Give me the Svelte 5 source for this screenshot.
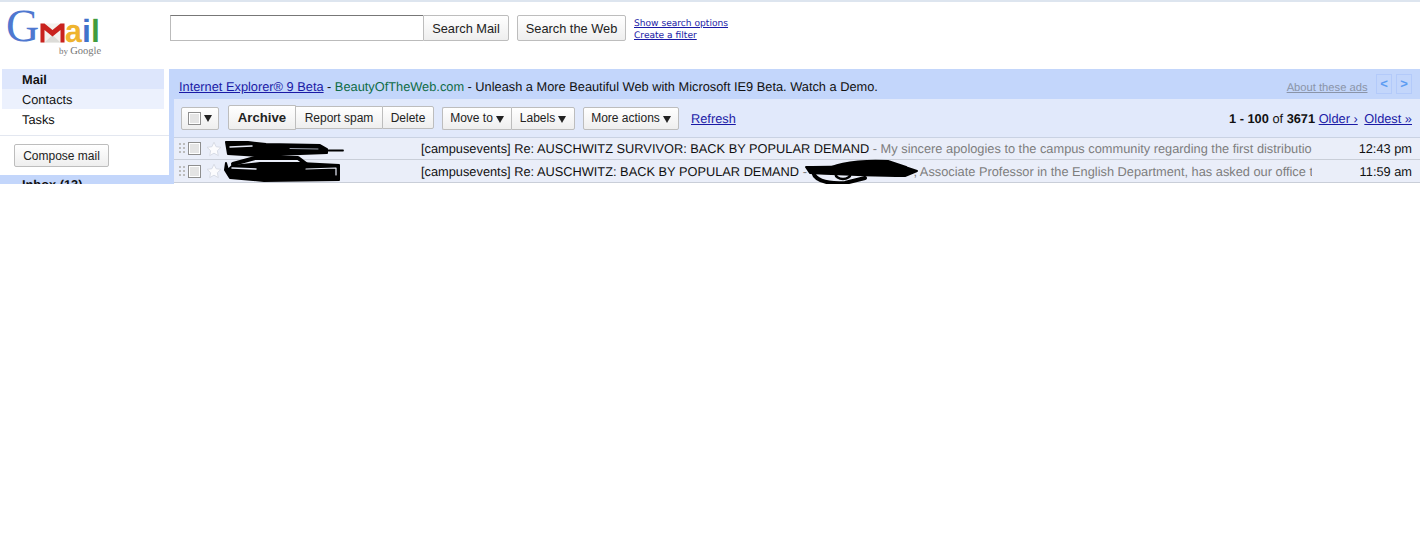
<script>
  const rows = [
    { subj: '[campusevents] Re: AUSCHWITZ SURVIVOR: BACK BY POPULAR DEMAND', before: ' - My sincere apologies to the campus community regarding the first distributio', after: '', time: '12:43 pm' },
    { subj: '[campusevents] Re: AUSCHWITZ: BACK BY POPULAR DEMAND', before: ' - ', after: ', Associate Professor in the English Department, has asked our office t', time: '11:59 am' }
  ];
</script>

<div class="page">
  <header class="top">
    <div class="logo">
      <span class="g">G</span>
      <svg class="m" width="25" height="20" viewBox="0 0 25 20">
        <rect x="0.500" y="0.500" width="24" height="19" fill="#f4f2ee"/>
        <path d="M4.500 19.500L12.500 12l8 7.500z" fill="#dcdcd8"/>
        <path d="M.5.500h4l8 6.500 8-6.500h4v19h-4V7l-8 6.500L4.500 7v12.500h-4z" fill="#c9231e"/>
      </svg>
      <span class="a">a</span><span class="i">i</span><span class="l">l</span>
      <span class="by">by <span class="goog">Google</span></span>
    </div>
    <div class="search">
      <input class="q" type="text" aria-label="Search" />
      <button class="btn attached">Search Mail</button>
      <button class="btn web">Search the Web</button>
      <div class="searchlinks">
        <a href="#o">Show search options</a>
        <a href="#f">Create a filter</a>
      </div>
    </div>
  </header>

  <div class="body">
    <nav class="side">
      <ul class="nav">
        <li class="cur">Mail</li>
        <li class="alt">Contacts</li>
        <li>Tasks</li>
      </ul>
      <div class="composewrap"><button class="btn compose">Compose mail</button></div>
      <div class="inbox">Inbox (13)</div>
    </nav>

    <main class="main">
      <div class="ad">
        <a href="#ie">Internet Explorer® 9 Beta</a>
        <span class="sep">-</span>
        <span class="dom">BeautyOfTheWeb.com</span>
        <span class="sep">-</span>
        <span>Unleash a More Beautiful Web with Microsoft IE9 Beta. Watch a Demo.</span>
        <span class="grow"></span>
        <a class="about" href="#a">About these ads</a>
        <span class="pager"><i>&lt;</i><i>&gt;</i></span>
      </div>

      <div class="toolbar">
        <button class="btn sel"><span class="cb"></span><span class="caret"></span></button>
        <div class="group">
          <button class="btn archive">Archive</button>
          <button class="btn mid">Report spam</button>
          <button class="btn end del">Delete</button>
        </div>
        <div class="group g2">
          <button class="btn first">Move to<span class="caret"></span></button>
          <button class="btn end lab">Labels<span class="caret"></span></button>
        </div>
        <button class="btn more">More actions<span class="caret"></span></button>
        <a class="refresh" href="#r">Refresh</a>
        <span class="grow"></span>
        <div class="count"><b>1</b> <b>-</b> <b>100</b> of <b>3671</b> <a href="#older">Older ›</a> <a class="oldest" href="#oldest">Oldest »</a></div>
      </div>

      <div class="list">
        {#each rows as r, i}
          <div class="row" class:tall={i === 1}>
            <span class="grip"></span>
            <span class="cb"></span>
            <svg class="star" width="16" height="16" viewBox="0 0 16 16"><path d="M8 1.200l2.100 4.500 4.900.6-3.600 3.400.9 4.900L8 12.200l-4.300 2.400.9-4.900L1 6.300l4.900-.6z" fill="#fbfbfd" stroke="#d8dce6"/></svg>
            <span class="who"></span>
            <span class="msg">{r.subj}<span class="snip">{r.before}{#if r.after}<span class="hidden-name"></span>{r.after}{/if}</span></span>
            <span class="time">{r.time}</span>
          </div>
        {/each}

        <svg class="scribble" width="760" height="50" viewBox="174 138 760 50" aria-hidden="true">
          <g fill="none" stroke="#000" stroke-linecap="round" stroke-linejoin="round">
            <path d="M226 142L248 142 266 144 320 145 327 149 327 153 300 154 262 156 228 154z" fill="#000" stroke-width="2"/>
            <path d="M326 150.500H343" stroke-width="1.800"/>
            <path d="M230 147L252 146" stroke="#e8ecf8" stroke-width="1.500"/>
            <path d="M290 148.500L318 149" stroke="#9aa0ad" stroke-width="1"/>
            <path d="M233 164L255 158 298 158 306 164" stroke-width="4"/>
            <path d="M226 163L228 170 232 166 260 163 300 163 339 165 339 180 264 181 230 178 225 170z" fill="#000" stroke-width="2"/>
            <path d="M232 168L256 169" stroke="#e8ecf8" stroke-width="1.500"/>
            <path d="M306 169L336 168 336 175" stroke="#e8ecf8" stroke-width="1.200"/>
            <path d="M806 167C840 167 880 165 905 167L917 171 905 176C880 176 850 175 810 173z" fill="#000" stroke-width="2"/>
            <path d="M832 167C845 161 870 160 888 161L906 167" fill="#000" stroke-width="2"/>
            <path d="M813 172C815 180 825 184 845 183L865 178" stroke-width="4"/>
            <ellipse cx="843" cy="174" rx="7.500" ry="5" stroke-width="2.500"/>
          </g>
        </svg>
      </div>
      <div class="foot"></div>
    </main>
  </div>
</div>

<style>
  :global(body) {
    margin: 0;
    background: #fff;
    font-family: "Liberation Sans", Arial, sans-serif;
    color: #111;
    text-rendering: geometricPrecision;
  }
  .page {
    width: 1420px;
    height: 184px;
    overflow: hidden;
    font-size: 12.800px;
    border-top: 2px solid #dde5ef;
    box-sizing: border-box;
  }
  a { color: #1a1aa6; }

  .top { display: flex; height: 67px; }
  .logo {
    position: relative;
    width: 170px;
    flex: none;
    height: 67px;
  }
  .logo span, .logo svg { position: absolute; }
  .g { left: 6px; top: -1px; font: 46px/50px "Liberation Serif", serif; color: #4f78d0; }
  .m { left: 40px; top: 21px; }
  .a, .i, .l { font: bold 32px/40px "Liberation Sans", sans-serif; top: 9px; }
  .a { left: 65px; color: #efb42f; transform: scaleX(0.95); transform-origin: left; }
  .i { left: 82px; color: #3f73cb; }
  .l { left: 91px; color: #3f9c3f; }
  .by { left: 59px; top: 43px; font: 9px/12px "Liberation Serif", serif; color: #777; white-space: nowrap; }
  .goog { position: static !important; font-size: 10.500px; }

  .search { display: flex; align-items: flex-start; padding-top: 13px; }
  .q {
    width: 253px;
    height: 26px;
    padding: 0;
    box-sizing: border-box;
    border: 1px solid #bbb;
    border-top-color: #777;
    border-right: 0;
    background: #fff;
  }
  .btn {
    font: 12px/1 "Liberation Sans", Arial, sans-serif;
    color: #222;
    background: linear-gradient(#fff, #eeeeee);
    border: 1px solid #bdbdbd;
    border-radius: 2px;
    padding: 0;
    white-space: nowrap;
    box-sizing: border-box;
  }
  .attached { font-size: 12.800px; width: 86px; height: 26px; border-radius: 0 2px 2px 0; padding-top: 2px; }
  .web { font-size: 12.800px; width: 109px; height: 26px; margin-left: 8px; padding-top: 2px; }
  .searchlinks {
    display: flex;
    flex-direction: column;
    margin: 3px 0 0 8px;
    font: 9.100px/12px "DejaVu Sans", sans-serif;
  }

  .body { display: flex; }
  .side { width: 169px; flex: none; }
  .nav { list-style: none; margin: 0; padding: 0 5px 6px 2px; border-bottom: 1px solid #e3e7f0; }
  .nav li { height: 20px; line-height: 21px; padding-left: 20px; }
  .cur { background: #dde6fc; font-weight: bold; }
  .alt { background: #ecf1fd; }
  .composewrap { padding: 8px 0 8px 14px; }
  .compose { width: 95px; height: 23px; }
  .inbox {
    background: #c3d6fb;
    font-weight: bold;
    height: 20px;
    line-height: 20px;
    padding-left: 22px;
    width: 170px;
    box-sizing: border-box;
  }

  .main { flex: 1; min-width: 0; background: #c3d6fb; }
  .ad {
    display: flex;
    align-items: center;
    gap: 3.500px;
    height: 30px;
    padding: 5px 8px 0 10px;
    box-sizing: border-box;
  }
  .dom { color: #0e6b45; }
  .grow { flex: 1; }
  .about { font-size: 11.200px; color: #8a94a8; margin-right: 5px; padding-top: 2px; }
  .pager { display: flex; gap: 4px; margin-top: -5px; }
  .pager i {
    width: 14px;
    height: 18px;
    border: 1px solid #b3cafa;
    font: bold 13px/18px "Liberation Sans", sans-serif;
    color: #5b9cf2;
    text-align: center;
  }

  .toolbar {
    display: flex;
    align-items: center;
    height: 38px;
    padding: 0 8px 0 7px;
    margin-left: 5px;
    background: #e1e9fb;
    box-sizing: border-box;
  }
  .toolbar .btn { height: 23px; }
  .sel { width: 38px; display: flex; align-items: center; gap: 3px; padding-left: 6px; }
  .group { display: flex; margin-left: 9px; }
  .g2 { margin-left: 8px; }
  .toolbar .archive { width: 68px; height: 25px; font-weight: bold; font-size: 13.200px; margin-top: -1px; border-radius: 2px 0 0 2px; z-index: 1; position: relative; }
  .mid { width: 86px; border-left: 0; border-right: 0; border-radius: 0; }
  .end { border-radius: 0 2px 2px 0; }
  .del { width: 52px; }
  .first { width: 69px; border-radius: 2px 0 0 2px; border-right: 0; }
  .lab { width: 64px; }
  .toolbar .more { width: 96px; margin-left: 8px; }
  .refresh { margin-left: 12px; }
  .caret {
    display: inline-block;
    width: 0;
    height: 0;
    margin-left: 3px;
    border: 4px solid transparent;
    border-top: 7px solid #222;
    border-bottom: 0;
    vertical-align: -1px;
  }
  .cb {
    display: inline-block;
    width: 13px;
    height: 13px;
    box-sizing: border-box;
    background: #e4e4e4;
    border: 1px solid #8e8e8e;
    box-shadow: inset 0 0 0 1px #fff;
  }
  .sel .caret { margin-left: 0; }
  .oldest { margin-left: 3px; }

  .list {
    position: relative;
    margin-left: 5px;
    border-top: 1px solid #c9d2e3;
  }
  .row {
    display: flex;
    align-items: center;
    height: 22px;
    box-sizing: border-box;
    background: #eaeef9;
    border-bottom: 1px solid #c9ced8;
  }
  .tall { height: 23px; }
  .grip {
    flex: none;
    width: 7px;
    height: 13px;
    margin: 0 3px 0 4px;
    background-image: radial-gradient(#bcbcbc 48%, transparent 52%);
    background-size: 4px 4px;
  }
  .row .cb { flex: none; }
  .star { flex: none; margin-left: 5px; }
  .who { width: 199px; flex: none; }
  .msg { flex: 0 0 891px; overflow: hidden; white-space: nowrap; }
  .snip { color: #7d7d7d; }
  .hidden-name { display: inline-block; width: 103px; }
  .time { flex: 1; text-align: right; padding-right: 8px; }
  .scribble { position: absolute; left: 0; top: 0; pointer-events: none; overflow: visible; }
  .foot { height: 10px; margin-left: 5px; background: #fff; }
</style>
